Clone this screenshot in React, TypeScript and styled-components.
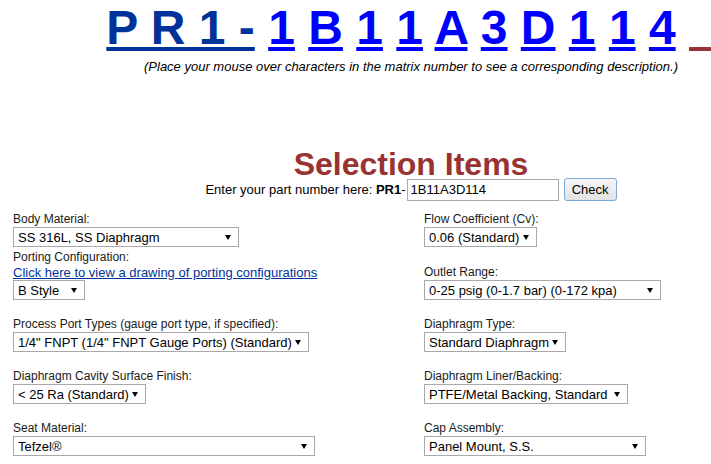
import React, { Fragment } from "react";
import styled, { createGlobalStyle } from "styled-components";

const Global = createGlobalStyle`
  html, body { margin: 0; padding: 0; overflow: hidden; background: #fff; }
  body { font-family: "Liberation Sans", Arial, sans-serif; color: #000; }
`;

const Page = styled.div`
  width: 822px;
  display: flex;
  flex-direction: column;
`;

const Matrix = styled.div`
  text-align: center;
  font-size: 48px;
  font-weight: bold;
  line-height: 55px;
  white-space: pre;
`;

const MatrixLink = styled.a<{ $tone: "prefix" | "code" | "trail" }>`
  text-decoration: underline;
  cursor: pointer;
  color: ${(p) =>
    p.$tone === "prefix" ? "#003399" : p.$tone === "code" ? "#0000ff" : "#993333"};
`;

const Hint = styled.div`
  margin-top: 4px;
  text-align: center;
  font-size: 13px;
  font-style: italic;
  line-height: 15px;
`;

const DescriptionArea = styled.div`
  height: 77px;
`;

const Title = styled.h1`
  margin: 0;
  text-align: center;
  font-size: 32px;
  font-weight: bold;
  line-height: 27px;
  color: #993333;
`;

const PartRow = styled.div`
  display: flex;
  justify-content: center;
  align-items: center;
  height: 23px;
  font-size: 13px;
`;

const PartLabel = styled.span`
  white-space: pre;
  b { font-weight: bold; }
`;

const PartInput = styled.input`
  box-sizing: border-box;
  width: 152px;
  height: 22px;
  margin: 0 0 0 1px;
  padding: 0 3px;
  border: 1px solid #a9a9a9;
  font: 13px "Liberation Sans", Arial, sans-serif;
  color: #000;
  outline: none;
`;

const CheckButton = styled.button`
  box-sizing: border-box;
  width: 53px;
  height: 23px;
  margin-left: 5px;
  padding: 0;
  border: 1px solid #7aa7d6;
  border-radius: 3px;
  background: linear-gradient(#f6f6f6, #e2e2e2);
  font: 13px "Liberation Sans", Arial, sans-serif;
  color: #000;
`;

const Form = styled.div`
  margin-top: 11px;
  padding-left: 13px;
  display: flex;
  flex-direction: column;
`;

const FormRow = styled.div<{ $space: number }>`
  display: grid;
  grid-template-columns: 411px 1fr;
  align-items: end;
  margin-top: ${(p) => p.$space}px;
`;

const Field = styled.div`
  display: flex;
  flex-direction: column;
  align-items: flex-start;
`;

const Label = styled.div`
  font-size: 12px;
  line-height: 15px;
  color: #1a1a1a;
`;

const DrawingLink = styled.a`
  font-size: 13px;
  line-height: 15px;
  color: #003399;
  text-decoration: underline;
  cursor: pointer;
`;

const SelectWrap = styled.div`
  position: relative;
  display: inline-block;
`;

const Select = styled.select<{ $w: number }>`
  appearance: none;
  -webkit-appearance: none;
  box-sizing: border-box;
  width: ${(p) => p.$w}px;
  height: 20px;
  margin: 0;
  padding: 0 0 0 4px;
  border: 1px solid #a9a9a9;
  border-radius: 0;
  background: #fff;
  font: 13px "Liberation Sans", Arial, sans-serif;
  color: #000;
  outline: none;
`;

const Arrow = styled.svg`
  position: absolute;
  right: 8px;
  top: 8px;
  pointer-events: none;
`;

function Dropdown({ value, w }: { value: string; w: number }) {
  return (
    <SelectWrap>
      <Select $w={w} defaultValue={value}>
        <option value={value}>{value}</option>
      </Select>
      <Arrow width="6" height="5" viewBox="0 0 6 5">
        <polygon points="0,0 6,0 3,5" fill="#000" />
      </Arrow>
    </SelectWrap>
  );
}

const code = ["1", "B", "1", "1", "A", "3", "D", "1", "1", "4"];

export default function App() {
  return (
    <>
      <Global />
      <Page>
        <Matrix>
          <MatrixLink $tone="prefix">P R 1 -</MatrixLink>
          {code.map((c, i) => (
            <Fragment key={i}>
              {" "}
              <MatrixLink $tone="code">{c}</MatrixLink>
            </Fragment>
          ))}
          {" "}
          <MatrixLink $tone="trail">{"\u00a0\u00a0"}</MatrixLink>
        </Matrix>
        <Hint>
          (Place your mouse over characters in the matrix number to see a corresponding
          description.)
        </Hint>
        <DescriptionArea />
        <Title>Selection Items</Title>
        <PartRow>
          <PartLabel>
            Enter your part number here: <b>PR1</b>-
          </PartLabel>
          <PartInput defaultValue="1B11A3D114" />
          <CheckButton>Check</CheckButton>
        </PartRow>
        <Form>
          <FormRow $space={0}>
            <Field>
              <Label>Body Material:</Label>
              <Dropdown value="SS 316L, SS Diaphragm" w={226} />
            </Field>
            <Field>
              <Label>Flow Coefficient (Cv):</Label>
              <Dropdown value="0.06 (Standard)" w={113} />
            </Field>
          </FormRow>
          <FormRow $space={3}>
            <Field>
              <Label>Porting Configuration:</Label>
              <DrawingLink>Click here to view a drawing of porting configurations</DrawingLink>
              <Dropdown value="B Style" w={72} />
            </Field>
            <Field>
              <Label>Outlet Range:</Label>
              <Dropdown value="0-25 psig (0-1.7 bar) (0-172 kpa)" w={237} />
            </Field>
          </FormRow>
          <FormRow $space={17}>
            <Field>
              <Label>Process Port Types (gauge port type, if specified):</Label>
              <Dropdown value={'1/4" FNPT (1/4" FNPT Gauge Ports) (Standard)'} w={296} />
            </Field>
            <Field>
              <Label>Diaphragm Type:</Label>
              <Dropdown value="Standard Diaphragm" w={142} />
            </Field>
          </FormRow>
          <FormRow $space={17}>
            <Field>
              <Label>Diaphragm Cavity Surface Finish:</Label>
              <Dropdown value="< 25 Ra (Standard)" w={133} />
            </Field>
            <Field>
              <Label>Diaphragm Liner/Backing:</Label>
              <Dropdown value="PTFE/Metal Backing, Standard" w={204} />
            </Field>
          </FormRow>
          <FormRow $space={17}>
            <Field>
              <Label>Seat Material:</Label>
              <Dropdown value="Tefzel®" w={302} />
            </Field>
            <Field>
              <Label>Cap Assembly:</Label>
              <Dropdown value="Panel Mount, S.S." w={222} />
            </Field>
          </FormRow>
        </Form>
      </Page>
    </>
  );
}
